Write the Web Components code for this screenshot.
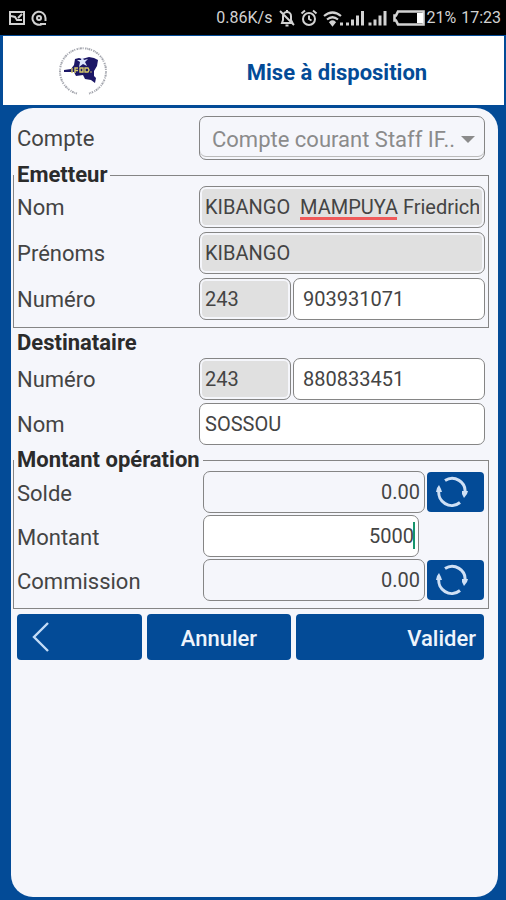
<!DOCTYPE html>
<html lang="fr">
<head>
<meta charset="utf-8">
<meta name="viewport" content="width=device-width, initial-scale=1">
<title>Mise à disposition</title>
<style>
  :root {
    --blue: #034b97;
    --panel: #f5f6fb;
    --line: #858585;
    --ink: #444;
  }
  body {
    margin: 0;
    font-family: Roboto, "Liberation Sans", sans-serif;
    font-size: 22px;
    color: var(--ink);
    background: var(--blue);
  }
</style>
</head>
<body>
<mobile-screen>
  <status-bar slot="status"></status-bar>
  <app-header slot="header">Mise à disposition</app-header>
  <account-row label="Compte" value="Compte courant Staff IF.."></account-row>
  <field-group heading="Emetteur" framed>
    <field-row label="Nom" value="KIBANGO  MAMPUYA Friedrich" locked misspelt></field-row>
    <field-row label="Prénoms" value="KIBANGO" locked></field-row>
    <field-row label="Numéro" prefix="243" value="903931071"></field-row>
  </field-group>
  <field-group heading="Destinataire">
    <field-row label="Numéro" prefix="243" value="880833451"></field-row>
    <field-row label="Nom" value="SOSSOU"></field-row>
  </field-group>
  <field-group heading="Montant opération" framed dense>
    <amount-row label="Solde" value="0.00" refresh></amount-row>
    <amount-row label="Montant" value="5000"></amount-row>
    <amount-row label="Commission" value="0.00" refresh></amount-row>
  </field-group>
  <action-bar></action-bar>
</mobile-screen>

<script>
const define = (name, render) => customElements.define(name, class extends HTMLElement {
  connectedCallback() {
    if (this.shadowRoot) return;
    this.attachShadow({ mode: "open" }).innerHTML = render(this);
  }
});

const fieldStyles = `
  label { line-height: 26px; padding-top: 2px; }
  input, select {
    box-sizing: border-box; width: 100%; min-width: 0; height: 42px; margin: 0;
    padding: 0 5px; border: 1px solid var(--line); border-radius: 7px;
    background: #fff; color: var(--ink); font: inherit; font-size: 20px;
    outline: none; appearance: none;
  }
  input[readonly] { background: #e0e0e0; box-shadow: inset 0 0 0 2px var(--panel); }
`;

define("mobile-screen", () => `
  <style>
    :host { display: flex; flex-direction: column; min-height: 100vh; }
    main {
      flex: 1; display: flex; flex-direction: column;
      margin: 3px 8px 3px 11px; padding: 8px 9px 8px 2px;
      border-radius: 22px; background: var(--panel);
    }
  </style>
  <slot name="status"></slot>
  <slot name="header"></slot>
  <main><slot></slot></main>`);

define("status-bar", () => `
  <style>
    :host { display: flex; align-items: center; height: 35px; padding: 0 5px 0 9px;
      background: #000; color: #d2d2d2; font-size: 16px; line-height: 20px; }
    svg { display: block; flex: none; }
    .left { display: flex; gap: 6px; flex: 1; }
    .icons { display: flex; align-items: center; gap: 5px; margin: 0 1px 0 7px; }
    time { margin-left: 5px; }
  </style>
  <div class="left">
    <svg width="16" height="16" viewBox="0 0 16 16" fill="none" stroke="#d2d2d2" stroke-width="2"><rect x="1" y="2" width="14" height="12"/><path d="M2 6l4 1 2 3h5M9 8l4-4"/></svg>
    <svg width="16" height="16" viewBox="0 0 16 16" fill="none" stroke="#d2d2d2" stroke-width="2"><path d="M11 14A6.500 6.500 0 1 1 14.500 8v3M9 14h6"/><circle cx="8" cy="8" r="2"/></svg>
  </div>
  <span>0.86K/s</span>
  <div class="icons">
    <svg width="16" height="18" viewBox="0 0 16 18" fill="none" stroke="#d2d2d2" stroke-width="2"><path d="M3 14h10.500L12 11V7a4 4 0 0 0-8 0v4zM8 3V1M6.500 16.500h3M1 2l14 14"/></svg>
    <svg width="18" height="18" viewBox="0 0 18 18" fill="none" stroke="#d2d2d2" stroke-width="2"><circle cx="9" cy="10" r="6"/><path d="M9 6.500V10l2.500 1.500M1.500 4.500l3.500-3M16.500 4.500l-3.500-3"/></svg>
    <svg width="102" height="18" viewBox="0 0 102 18" fill="none" stroke="#d2d2d2" stroke-width="2.200">
      <path d="M1 7q8.500-7 17 0M4 10.500q5.500-4.500 11 0M7 13.500q2.500-2 5 0"/>
      <path d="M8 14h3l-1.500 2z" fill="#d2d2d2"/>
      <path stroke-width="3" d="M18.500 13.500v3M24.500 13.500v3M29.500 10.500v6M34.500 6.500v10M39.500 2v14.500M47 13.500v3M52 10.500v6M57 6.500v10M62 2v14.500"/>
      <path stroke-width="2.600" d="M75 2.500h25.500v13H75l-2-4h-1.500v-5H73z"/>
      <path d="M97 4v10" stroke="#fff" stroke-width="6"/>
    </svg>
  </div>
  <span>21%</span><time>17:23</time>`);

define("app-header", () => `
  <style>
    :host { display: grid; grid-template-columns: 1fr 2fr; align-items: center; height: 69px;
      margin: 1px 2px 0 3px; background: #fff; }
    svg { display: block; }
    h1 { margin: 0; padding-top: 4px; text-align: center; font-size: 22px; line-height: 28px; font-weight: 700; color: var(--blue); }
    .logo { padding-right: 62px; justify-self: end; }
  </style>
  <div class="logo"><svg width="50" height="50" viewBox="0 0 50 50" role="img" aria-label="IFOD">
    <path d="M19 47.500A23 23 0 1 1 31 47.500" fill="none" stroke="#a3a5ad" stroke-width="2" stroke-dasharray="1.400 .7 .8 .6 1.800 .8 1 1.400"/>
    <path d="M17 13l4-1 3 1 7-2 5 1 4 2-1 6-3 5v5l2 2-1 5-4-3-6-1-2-4-7 1-2-4H6v-2l7-1 3-4z" fill="#1c1766"/>
    <path d="M24 11l2 3 4-1-3 3 2 4-4-2-4 3 1-5-3-2h4z" fill="#dce5fb"/>
    <path d="M14 22v5M17 27v-5h3M17 24.500h3M22 22h3v4h-3zM27 22h3l1 2-1 2h-3zM32.500 26h1" fill="none" stroke="#d6ca69" stroke-width="1.400"/>
  </svg></div>
  <h1><slot></slot></h1>`);

define("account-row", el => `
  <style>
    ${fieldStyles}
    :host { display: grid; grid-template-columns: 7fr 11fr; align-items: center; padding: 0 4px; margin-bottom: 4px; }
    .box { position: relative; }
    select { display: block; height: 44px; padding: 2px 12px 0; font-size: 22px; color: #8b8b8b; opacity: 1;
      background: var(--panel); box-shadow: inset 0 -2px var(--panel), inset 0 -3px #bbb; }
    svg { position: absolute; right: 10px; top: 20px; pointer-events: none; }
  </style>
  <label for="account">${el.getAttribute("label")}</label>
  <div class="box">
    <select id="account"><option>${el.getAttribute("value")}</option></select>
    <svg width="14" height="7" viewBox="0 0 14 7"><path d="M0 0h14L7 7z" fill="#8b8b8b"/></svg>
  </div>`);

define("field-group", el => {
  const framed = el.hasAttribute("framed");
  const dense = el.hasAttribute("dense");
  return `
  <style>
    :host { display: block; }
    fieldset { min-width: 0; margin: 0; ${framed
      ? "padding: 0 3px 7px; border: 1px solid var(--line);"
      : "padding: 0 4px 4px; border: 0;"} }
    legend { margin-left: -3px; padding: ${framed ? "0 3px" : "4px 3px"}; font-weight: 700; line-height: 22px; color: #2b2b2b; }
    div { display: grid; gap: ${dense ? 2 : framed ? 4 : 3}px; }
  </style>
  <fieldset><legend>${el.getAttribute("heading")}</legend><div><slot></slot></div></fieldset>`;
});

define("field-row", el => {
  const label = el.getAttribute("label");
  const prefix = el.getAttribute("prefix");
  return `
  <style>
    ${fieldStyles}
    :host { display: grid; grid-template-columns: 7fr 11fr; align-items: center; }
    .box { position: relative; display: grid; gap: 2px; grid-template-columns: ${prefix ? "12fr 25fr" : "1fr"}; }
    .number { padding-left: 9px; }
    .misspelling { position: absolute; left: 101px; bottom: 8px; width: 97px; height: 3px; background: #ef5a5a; }
  </style>
  <label for="value">${label}</label>
  <div class="box">
    ${prefix ? `<input value="${prefix}" aria-label="Indicatif" readonly>` : ""}
    <input id="value" class="${prefix ? "number" : ""}" value="${el.getAttribute("value")}" ${el.hasAttribute("locked") ? "readonly" : ""}>
    ${el.hasAttribute("misspelt") ? `<span class="misspelling"></span>` : ""}
  </div>`;
});

define("amount-row", el => {
  const refresh = el.hasAttribute("refresh");
  return `
  <style>
    ${fieldStyles}
    :host { display: grid; grid-template-columns: 186fr 222fr 59fr; align-items: center; padding-right: 1px; }
    label { padding-top: 4px; }
    .box { position: relative; margin-right: ${refresh ? 0 : 6}px; }
    input { display: block; text-align: right; padding: 0 4px; }
    input[readonly] { background: var(--panel); }
    .caret { position: absolute; right: 4px; top: 7px; width: 2px; height: 27px; background: #16946c; }
    button { height: 40px; margin: 0 0 0 2px; padding: 0 9px; border: 0; border-radius: 4px; background: var(--blue); }
    svg { display: block; }
  </style>
  <label for="value">${el.getAttribute("label")}</label>
  <div class="box">
    <input id="value" value="${el.getAttribute("value")}" inputmode="decimal" ${refresh ? "readonly" : ""}>
    ${refresh ? "" : `<span class="caret"></span>`}
  </div>
  ${refresh ? `<button type="button" aria-label="Actualiser">
    <svg width="32" height="32" viewBox="0 0 32 32" fill="none" stroke="#cfe0f5" stroke-width="3"><path d="M9 4.500A13 13 0 0 1 29 17M24 26.500A13 13 0 0 1 3 14"/><path d="M26 15h6l-1 3-3 4-2-4zM0 16h6l-1-3-2-4-2 3z" fill="#cfe0f5" stroke="none"/></svg>
  </button>` : ""}`;
});

define("action-bar", () => `
  <style>
    :host { display: grid; grid-template-columns: 125fr 144fr 188fr; gap: 5px; padding: 0 5px 0 4px; margin-top: 5px; }
    button { height: 46px; padding: 2px 8px 0; border: 0; border-radius: 4px; background: var(--blue);
      color: #eef4fc; font: inherit; font-weight: 500; }
    .back { padding: 0 14px; }
    .submit { text-align: right; }
    svg { display: block; }
  </style>
  <button type="button" class="back" aria-label="Retour"><svg width="18" height="32" viewBox="0 0 18 32" fill="none" stroke="#c3dcf7" stroke-width="2.400"><path d="M17 2L3 16l14 14"/></svg></button>
  <button type="button">Annuler</button>
  <button type="submit" class="submit">Valider</button>`);
</script>
</body>
</html>
